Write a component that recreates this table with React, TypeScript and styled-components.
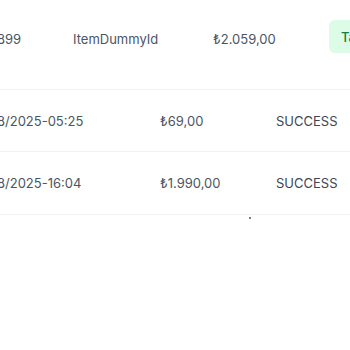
import React from "react";
import styled, { createGlobalStyle } from "styled-components";

const Global = createGlobalStyle`
  html, body { margin: 0; padding: 0; background: #ffffff; }
  body { font-family: Inter, "Noto Sans", sans-serif; font-size: 13px; color: #4b5563; }
`;

const Viewport = styled.div`
  width: 350px;
  height: 350px;
  overflow: hidden;
  position: relative;
  background: #fff;
`;

const Track = styled.div`
  margin-left: -3px;
  width: 420px;
`;

const Row = styled.div<{ $cols: string; $h: number; $padBottom?: number }>`
  display: grid;
  grid-template-columns: ${(p) => p.$cols};
  align-items: center;
  height: ${(p) => p.$h}px;
  padding-bottom: ${(p) => p.$padBottom ?? 0}px;
  box-sizing: border-box;
  border-bottom: 1px solid #f0f1f3;
  width: 356px;
`;

const Cell = styled.div`
  white-space: nowrap;
  font-size: 13px;
  line-height: 20px;
  color: #4b5563;
`;

const Status = styled(Cell)`
  color: #3f4652;
`;

const Badge = styled.div`
  display: inline-flex;
  align-items: center;
  height: 33px;
  padding: 0 12px;
  border-radius: 6px;
  background: #dcfce7;
  color: #15803d;
  font-size: 13px;
  font-weight: 500;
  margin-top: -5px;
`;

const Dot = styled.div`
  position: absolute;
  left: 249px;
  top: 217px;
  width: 2px;
  height: 2px;
  border-radius: 50%;
  background: #555;
`;

export default function App() {
  return (
    <>
      <Global />
      <Viewport>
        <Track>
          <Row $cols="76px 140px 116px 1fr" $h={90} $padBottom={11}>
            <Cell>899</Cell>
            <Cell>ItemDummyId</Cell>
            <Cell>₺2.059,00</Cell>
            <div>
              <Badge>Tamamlandı</Badge>
            </div>
          </Row>
          <Row $cols="163px 116px 1fr" $h={62}>
            <Cell>8/2025-05:25</Cell>
            <Cell>₺69,00</Cell>
            <Status>SUCCESS</Status>
          </Row>
          <Row $cols="163px 116px 1fr" $h={63}>
            <Cell>8/2025-16:04</Cell>
            <Cell>₺1.990,00</Cell>
            <Status>SUCCESS</Status>
          </Row>
        </Track>
        <Dot />
      </Viewport>
    </>
  );
}
